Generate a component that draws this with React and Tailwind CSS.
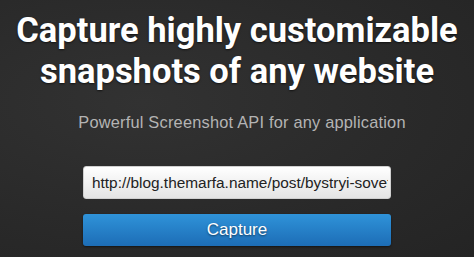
export default function App() {
  return (
    <div className="w-[474px] h-[257px] overflow-hidden bg-[#2a2a2a] bg-[radial-gradient(ellipse_at_30%_40%,#323232_0%,#2a2a2a_55%,#242424_100%)] flex flex-col items-center">
      <h1 className="mt-[10px] text-center text-white font-bold text-[34.5px] leading-[41px] whitespace-nowrap font-['Roboto',sans-serif] [text-shadow:0_1px_2px_rgba(0,0,0,0.6)]">
        Capture highly customizable
        <br />
        snapshots of any website
      </h1>
      <p className="mt-[21px] ml-[10px] text-[16.4px] leading-[18px] tracking-[0.2px] text-[#b4b4b4] font-['Liberation_Sans',Arial,sans-serif]">
        Powerful Screenshot API for any application
      </p>
      <div className="mt-[35px] w-[308px] flex flex-col gap-[15px]">
        <input
          type="text"
          readOnly
          value="http://blog.themarfa.name/post/bystryi-sovet-kak-sdelat-skrinshot"
          className="h-[33px] w-full rounded-[3px] border border-[#d0d0d0] bg-gradient-to-b from-white to-[#e4e4e4] pl-[8px] pr-[2px] text-[15.4px] text-[#222] font-['Liberation_Sans',Arial,sans-serif] outline-none"
        />
        <button className="h-[32px] w-full rounded-[3px] bg-gradient-to-b from-[#2f93d9] to-[#1d6db6] text-white text-[17px] font-['Liberation_Sans',Arial,sans-serif] shadow-[0_1px_2px_rgba(0,0,0,0.5)] [text-shadow:0_1px_2px_rgba(0,0,0,0.5)]">
          Capture
        </button>
      </div>
    </div>
  );
}
